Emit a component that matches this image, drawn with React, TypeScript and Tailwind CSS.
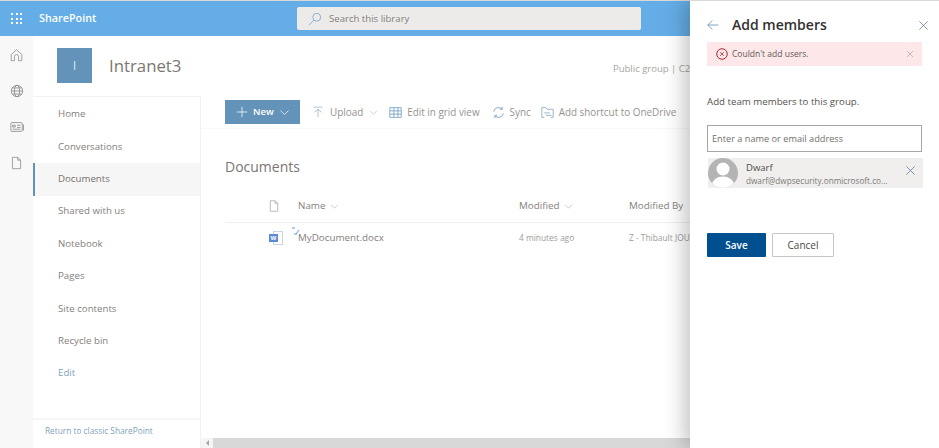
import React from "react";

const F = "font-['Open_Sans','Noto_Sans',sans-serif]";

function Stroke({ className, children, vb = 16 }: { className?: string; children: React.ReactNode; vb?: number }) {
  return (
    <svg viewBox={`0 0 ${vb} ${vb}`} fill="none" stroke="currentColor" strokeWidth="1" className={className}>
      {children}
    </svg>
  );
}

const nav = ["Home", "Conversations", "Documents", "Shared with us", "Notebook", "Pages", "Site contents", "Recycle bin", "Edit"];

function Waffle() {
  return (
    <div className="grid grid-cols-3 gap-[2.5px] w-[11px]">
      {Array.from({ length: 9 }).map((_, i) => (
        <div key={i} className="w-[2px] h-[2px] bg-white" />
      ))}
    </div>
  );
}

function Chevron({ className }: { className?: string }) {
  return (
    <Stroke className={className}>
      <path d="M2 5l6 6 6-6" />
    </Stroke>
  );
}

function X({ className }: { className?: string }) {
  return (
    <Stroke className={className}>
      <path d="M2 2l12 12M14 2L2 14" />
    </Stroke>
  );
}

export default function App() {
  return (
    <div className={`${F} relative w-[939px] h-[448px] overflow-hidden bg-white flex flex-col`}>
      <div className="h-px bg-[#d9d9d9] shrink-0" />
      <header className="h-[35px] shrink-0 bg-[#65ade6] flex items-center text-white">
        <div className="w-[33px] flex justify-center">
          <Waffle />
        </div>
        <div className="ml-[6px] w-[258px] text-[10.8px] font-semibold">SharePoint</div>
        <div className="w-[344px] h-[23px] bg-[#edebe9] rounded-[2px] flex items-center pl-[11px] text-[#86807c]">
          <Stroke className="w-[14px] h-[14px] text-[#7fa8d4]">
            <circle cx="10" cy="6" r="4.5" />
            <path d="M6.7 9.3L1 15" />
          </Stroke>
          <span className="ml-[7px] text-[9.6px] pt-px">Search this library</span>
        </div>
      </header>

      <div className="flex-1 flex min-h-0">
        <aside className="w-[33px] shrink-0 bg-[#f8f8f8] flex flex-col items-center pt-[10px] gap-[18px] text-[#8f8f8f]">
          <Stroke className="w-[13px] h-[18px]">
            <path d="M1.5 7.5L8 1.5l6.500 6V15h-4v-5a2.500 2.500 0 0 0-5 0v5h-4z" />
          </Stroke>
          <Stroke className="w-[14px] h-[18px]">
            <circle cx="8" cy="8" r="6.500" />
            <ellipse cx="8" cy="8" rx="3" ry="6.500" />
            <path d="M1.500 8h13M2.500 4.500h11M2.500 11.500h11" />
          </Stroke>
          <Stroke className="w-[14px] h-[18px]">
            <rect x="1" y="3" width="13" height="10" rx="1" />
            <path d="M3 6h3v2H3zM8 6h4M8 8.500h4M3 10.500h9M15.500 5v7" />
          </Stroke>
          <Stroke className="w-[13px] h-[18px]">
            <path d="M3 1h6.500L13 4.500V15H3zM9.500 1v3.500H13" />
          </Stroke>
        </aside>

        <main className="flex-1 min-w-0 flex flex-col">
          <div className="h-[60px] shrink-0 flex items-start pt-[12px] pl-[24px]">
            <div className="w-[35px] h-[35px] bg-[#6393b8] text-[#d6e3ec] flex items-center justify-center text-[13px]">I</div>
            <div className="ml-[17px] mt-[6px] w-[72px] text-[16.8px] leading-[24px] text-[#7c7672] font-medium">Intranet3</div>
            <div className="ml-[432px] mt-[14px] text-[9.5px] leading-[14px] whitespace-nowrap text-[#a8a5a2]">Public group | C2</div>
          </div>

          <div className="flex-1 flex min-h-0">
            <nav className="w-[168px] shrink-0 border-r border-t border-[#f3f2f1] flex flex-col">
              <div className="flex-1 pt-[1.4px]">
                {nav.map((n) => (
                  <div
                    key={n}
                    className={`h-[32.4px] flex items-center text-[9.7px] ${
                      n === "Documents"
                        ? "bg-[#f6f6f6] border-l-2 border-[#6393b8] pl-[23px] text-[#76716d] font-medium"
                        : n === "Edit"
                          ? "pl-[25px] text-[#7f9fbd]"
                          : "pl-[25px] text-[#85807c]"
                    }`}
                  >
                    {n}
                  </div>
                ))}
              </div>
              <div className="h-[30px] border-t-2 border-[#f6f6f6] pl-[12px] pt-[3px] text-[8.3px] leading-[16px] text-[#7f9fbd]">
                Return to classic SharePoint
              </div>
            </nav>

            <section className="flex-1 min-w-0 flex flex-col">
              <div className="h-[33px] shrink-0 border-b border-[#f8f8f8] flex items-center pl-[24px] text-[9.9px] text-[#96928f] whitespace-nowrap">
                <div className="w-[75px] h-[24px] bg-[#6393b8] flex items-center text-white font-semibold text-[9.5px]">
                  <Stroke className="w-[12px] h-[12px] ml-[11px] text-white">
                    <path d="M8 1v14M1 8h14" />
                  </Stroke>
                  <span className="ml-[5px]">New</span>
                  <Chevron className="w-[11px] h-[11px] ml-[5px]" />
                </div>
                <Stroke className="w-[12px] h-[14px] ml-[12px] text-[#8fb0cc]">
                  <path d="M2 1.500h12M8 15V4M3.500 8.500L8 4l4.500 4.500" />
                </Stroke>
                <span className="ml-[6px]">Upload</span>
                <Chevron className="w-[9px] h-[9px] ml-[6px] text-[#a8a5a2]" />
                <Stroke className="w-[13px] h-[13px] ml-[11px] text-[#6f9dc4]">
                  <path d="M1 2h14v12H1zM1 6h14M1 10h14M6 2v12M11 2v12" />
                </Stroke>
                <span className="ml-[5px]">Edit in grid view</span>
                <Stroke className="w-[13px] h-[13px] ml-[12px] text-[#6f9dc4]">
                  <path d="M2 7a6 6 0 0 1 10.500-3M14 9a6 6 0 0 1-10.500 3M12.500 1v3h-3M3.500 15v-3h3" />
                </Stroke>
                <span className="ml-[5px]">Sync</span>
                <Stroke className="w-[13px] h-[13px] ml-[10px] text-[#85a5c0]">
                  <path d="M1 14V2h5l1.500 2H15v10h-3M1 14h3M4 8.500h7M6 11.500h7" />
                </Stroke>
                <span className="ml-[5px]">Add shortcut to OneDrive</span>
              </div>

              <div className="flex-1 min-h-0 pl-[24px] pt-[28px]">
                <div className="text-[14px] leading-[20px] font-medium text-[#7c7672]">Documents</div>
                <div className="mt-[13px] h-[33px] flex items-center border-b border-[#f0efee] text-[9.8px] text-[#85807c] whitespace-nowrap">
                  <Stroke className="w-[12px] h-[14px] ml-[43px] text-[#a8a5a2]">
                    <path d="M3 1h6.500L13 4.500V15H3zM9.500 1v3.500H13" />
                  </Stroke>
                  <div className="ml-[18px] w-[221px] pt-px flex items-center">
                    <span>Name</span>
                    <Chevron className="w-[9px] h-[9px] ml-[5px] text-[#a8a5a2]" />
                  </div>
                  <div className="w-[110px] pt-px flex items-center">
                    <span>Modified</span>
                    <Chevron className="w-[9px] h-[9px] ml-[5px] text-[#a8a5a2]" />
                  </div>
                  <span className="pt-px">Modified By</span>
                </div>
                <div className="h-[30px] flex items-center whitespace-nowrap text-[#a09c99]">
                  <div className="relative ml-[44px] w-[14px] h-[14px]">
                    <div className="absolute right-0 top-0 w-[10px] h-[14px] border border-[#c9d6ea] bg-white" />
                    <div className="absolute left-0 top-[3px] w-[9px] h-[8px] bg-[#5b8bd6] text-white text-[6px] leading-[8px] text-center font-bold">W</div>
                  </div>
                  <div className="relative ml-[15px] w-[221px] pt-px text-[9.8px] text-[#85807c]">
                    <Stroke className="absolute -left-[6px] -top-[3px] w-[8px] h-[8px] text-[#5f9ed6]" vb={8}>
                      <path d="M0 1h3M4 7l3-4M5 7H2" />
                    </Stroke>
                    MyDocument.docx
                  </div>
                  <span className="w-[110px] text-[8.4px]">4 minutes ago</span>
                  <span className="text-[8.4px]">Z - Thibault JOUBERT</span>
                </div>
              </div>

              <div className="h-[10px] shrink-0 flex">
                <div className="w-[12px] bg-[#f5f5f5] flex items-center justify-center">
                  <div className="w-0 h-0 border-y-[3px] border-y-transparent border-r-[3px] border-r-[#a6a6a6]" />
                </div>
                <div className="flex-1 bg-[#d8d8d8]" />
              </div>
            </section>
          </div>
        </main>
      </div>

      <div className="absolute top-0 right-0 bottom-0 w-[249px] bg-white shadow-[-5px_0_20px_rgba(0,0,0,0.25)] flex flex-col px-[17px] border-t border-[#d9d9d9]">
        <div className="h-[41px] shrink-0 flex items-start pt-[14px]">
          <div className="h-[20px] w-full flex items-center">
            <Stroke className="w-[12px] h-[12px] text-[#4f86b8]">
              <path d="M15 8H1M7 2L1 8l6 6" />
            </Stroke>
            <div className="ml-[13px] text-[14px] leading-[20px] font-semibold text-[#323130]">Add members</div>
            <X className="w-[11px] h-[11px] ml-auto -mr-[7px] text-[#4f6f8f]" />
          </div>
        </div>
        <div className="h-[24px] shrink-0 bg-[#fde7e9] flex items-center pl-[9px] pr-[8px] text-[#5f5a57]">
          <Stroke className="w-[12px] h-[12px] text-[#a4262c]">
            <circle cx="8" cy="8" r="7" strokeWidth="1.300" />
            <path d="M5.500 5.500l5 5M10.500 5.500l-5 5" />
          </Stroke>
          <span className="ml-[4px] pt-px text-[8.500px]">Couldn&apos;t add users.</span>
          <X className="w-[8px] h-[8px] ml-auto text-[#8a8886]" />
        </div>
        <div className="mt-[29px] text-[9.700px] leading-[14px] text-[#57524f]">Add team members to this group.</div>
        <div className="mt-[16px] h-[27px] shrink-0 border border-[#a8a6a4] flex items-center pl-[4px] pt-px text-[9.200px] text-[#74706c]">
          Enter a name or email address
        </div>
        <div className="mt-[6px] ml-px h-[30px] w-[215px] shrink-0 bg-[#f0efee] flex items-center">
          <svg viewBox="0 0 30 30" className="w-[30px] h-[30px] shrink-0">
            <clipPath id="c">
              <circle cx="15" cy="15" r="15" />
            </clipPath>
            <g clipPath="url(#c)">
              <rect width="30" height="30" fill="#b4b4b4" />
              <circle cx="15" cy="11" r="6.500" fill="#fff" />
              <ellipse cx="15" cy="27" rx="11" ry="8.500" fill="#fff" />
            </g>
          </svg>
          <div className="ml-[8px] flex-1 min-w-0">
            <div className="text-[9.500px] leading-[14px] text-[#4f4b48]">Dwarf</div>
            <div className="text-[8.200px] leading-[11px] text-[#7d7975] whitespace-nowrap">dwarf@dwpsecurity.onmicrosoft.co...</div>
          </div>
          <X className="w-[11px] h-[11px] mr-[7px] -mt-[6px] shrink-0 text-[#3f6f9f]" />
        </div>
        <div className="mt-[45px] flex gap-[6px]">
          <div className="w-[59px] h-[24px] bg-[#004f8f] rounded-[1px] text-white text-[10px] font-semibold flex items-center justify-center">Save</div>
          <div className="w-[62px] h-[24px] border border-[#c8c6c4] rounded-[1px] text-[#4a4643] text-[10px] font-medium flex items-center justify-center">Cancel</div>
        </div>
      </div>
    </div>
  );
}
